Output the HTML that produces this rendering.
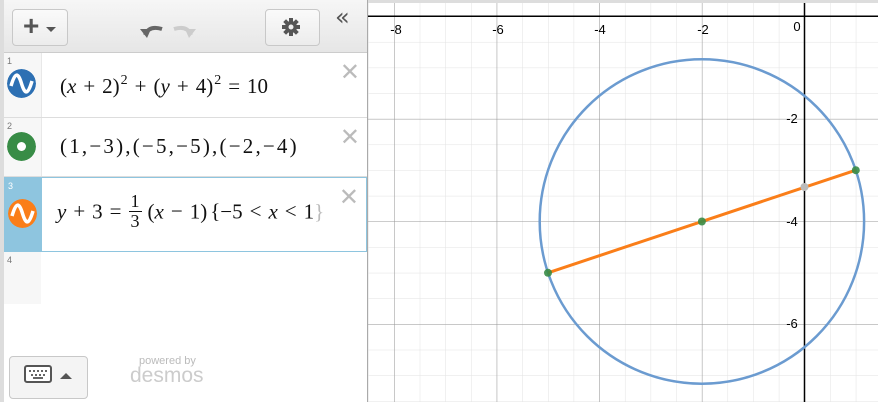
<!DOCTYPE html>
<html><head><meta charset="utf-8"><style>
body{margin:0;width:878px;height:402px;overflow:hidden;background:#fff;font-family:"Liberation Sans",sans-serif;position:relative}
.panel{position:absolute;left:0;top:0;width:368px;height:402px;background:#fff;border-right:1px solid #aaa;box-sizing:border-box}
.lb{position:absolute;left:0;top:0;width:4px;height:402px;background:#ddd}
.hdr{position:absolute;left:4px;top:0;width:363px;height:52px;background:linear-gradient(#f6f6f6,#e6e6e6);border-bottom:1px solid #ccc}
.btn{position:absolute;border:1px solid #c8c8c8;border-radius:4px;background:linear-gradient(#fafafa,#ececec)}
.row{position:absolute;left:4px;width:363px;border-bottom:1px solid #ddd;box-sizing:border-box}
.gut{position:absolute;left:0;top:0;width:37px;height:100%;background:#f7f7f7;border-right:1px solid #e8e8e8}
.num{position:absolute;left:3px;top:3px;font-size:9px;color:#777}
.ic{position:absolute;left:3px;width:29px;height:29px;border-radius:50%}
.m{position:absolute;left:56px;font-family:"Liberation Serif",serif;font-size:21px;color:#111;white-space:nowrap}
.m i{font-style:italic}
.m b{font-weight:normal;margin:0 7px}
.m sup{font-size:14px;vertical-align:9px;margin-left:1px}
.fr{display:inline-block;vertical-align:middle;text-align:center;font-size:18px;line-height:19px;margin:0 6px 0 0;position:relative;top:-2px}
.fr span{display:block;padding:0 2px}
.fr span+span{border-top:1px solid #111}
.x{position:absolute;right:7px;top:5px;color:#bbb;font-size:24px;font-family:"DejaVu Sans",sans-serif}
</style></head><body>
<div class="panel">
<div class="lb"></div>
<div class="hdr">
 <div class="btn" style="left:8px;top:9px;width:54px;height:35px"></div>
 <div style="position:absolute;left:19px;top:10px;font-size:28px;font-weight:bold;color:#555">+</div>
 <div style="position:absolute;left:42px;top:27px;width:0;height:0;border-left:5px solid transparent;border-right:5px solid transparent;border-top:5px solid #555"></div>
 <svg style="position:absolute;left:134px;top:20px" width="60" height="20"><path d="M7 15 Q11 5 24 9" fill="none" stroke="#666" stroke-width="4"/><path d="M2 9 L9 18 L13 9 Z" fill="#666"/><path d="M53 15 Q49 5 36 9" fill="none" stroke="#ccc" stroke-width="4"/><path d="M58 9 L51 18 L47 9 Z" fill="#ccc"/></svg>
 <div class="btn" style="left:261px;top:9px;width:53px;height:35px"></div>
 <svg style="position:absolute;left:278px;top:18px" width="18" height="18" viewBox="0 0 18 18"><g fill="#555"><circle cx="9" cy="9" r="6"/><rect x="7" y="0" width="4" height="18"/><rect x="0" y="7" width="18" height="4"/><rect x="7" y="0" width="4" height="18" transform="rotate(45 9 9)"/><rect x="7" y="0" width="4" height="18" transform="rotate(-45 9 9)"/></g><circle cx="9" cy="9" r="2.5" fill="#eee"/></svg>
 <div style="position:absolute;left:331px;top:3px;font-size:24px;color:#555;font-family:'DejaVu Sans'">«</div>
</div>
<div class="row" style="top:53px;height:65px"><div class="gut"></div><span class="num">1</span>
 <svg class="ic" style="top:16px" viewBox="0 0 29 29"><circle cx="14.5" cy="14.5" r="14.5" fill="#2d70b3"/><path d="M4 17 C8 3 11 3 14.5 14.5 S21 26 25 12" fill="none" stroke="#fff" stroke-width="3.5"/></svg>
 <div class="m" style="top:20px">(<i>x</i><b>+</b>2)<sup>2</sup><b>+</b>(<i>y</i><b>+</b>4)<sup>2</sup><b>=</b>10</div><span class="x">✕</span></div>
<div class="row" style="top:118px;height:59px"><div class="gut"></div><span class="num">2</span>
 <svg class="ic" style="top:14px" viewBox="0 0 29 29"><circle cx="14.5" cy="14.5" r="14.5" fill="#388c46"/><circle cx="14.5" cy="14.5" r="4.5" fill="#fff"/></svg>
 <div class="m" style="top:16px;letter-spacing:2.2px">(1,−3),(−5,−5),(−2,−4)</div><span class="x">✕</span></div>
<div class="row" style="top:177px;height:75px;border:1px solid #8ec5df"><div class="gut" style="background:#8ec5df;border:none"></div><span class="num" style="color:#fff">3</span>
 <svg class="ic" style="top:21px" viewBox="0 0 29 29"><circle cx="14.5" cy="14.5" r="14.5" fill="#fa7e19"/><path d="M4 17 C8 3 11 3 14.5 14.5 S21 26 25 12" fill="none" stroke="#fff" stroke-width="3.5"/></svg>
 <div class="m" style="top:16px;left:52px"><i>y</i><b>+</b>3<b>=</b><span class="fr"><span>1</span><span>3</span></span>(<i>x</i><b>−</b>1)<span style="margin-left:3px">{</span>−5<b>&lt;</b><i>x</i><b>&lt;</b>1<span style="color:#bbb">}</span></div><span class="x">✕</span></div>
<div style="position:absolute;left:4px;top:252px;width:37px;height:52px;background:#f7f7f7"><span class="num">4</span></div>
<div class="btn" style="left:9px;top:356px;width:77px;height:41px;background:#f4f4f4"></div>
<svg style="position:absolute;left:24px;top:365px" width="28" height="18"><rect x="1" y="1" width="26" height="16" rx="2" fill="#fff" stroke="#555" stroke-width="2"/><g fill="#666"><rect x="5" y="5" width="2" height="2"/><rect x="9" y="5" width="2" height="2"/><rect x="13" y="5" width="2" height="2"/><rect x="17" y="5" width="2" height="2"/><rect x="21" y="5" width="2" height="2"/><rect x="7" y="9" width="2" height="2"/><rect x="11" y="9" width="2" height="2"/><rect x="15" y="9" width="2" height="2"/><rect x="19" y="9" width="2" height="2"/><rect x="9" y="12" width="10" height="2"/></g></svg>
<div style="position:absolute;left:60px;top:373px;border-left:6px solid transparent;border-right:6px solid transparent;border-bottom:6px solid #555"></div>
<div style="position:absolute;left:139px;top:355px;font-size:11px;color:#bbb">powered by</div>
<div style="position:absolute;left:130px;top:364px;font-size:21px;color:#ccc">desmos</div>
</div>
<svg style="position:absolute;left:368px;top:0" width="510" height="402" viewBox="368 0 510 402">
<defs>
<pattern id="mn" patternUnits="userSpaceOnUse" x="804.5" y="16.3" width="25.65" height="25.65"><path d="M0 0V25.65M0 0H25.65" stroke="#e2e2e2" stroke-width="1"/></pattern>
<pattern id="mj" patternUnits="userSpaceOnUse" x="804.5" y="16.3" width="102.6" height="102.6"><path d="M0 0V102.6M0 0H102.6" stroke="#999" stroke-width="1"/></pattern>
</defs>
<rect x="368" y="0" width="510" height="402" fill="url(#mn)"/>
<rect x="368" y="0" width="510" height="402" fill="url(#mj)"/>
<rect x="368" y="0" width="510" height="3" fill="#ddd"/>
<line x1="368" y1="16.3" x2="878" y2="16.3" stroke="#000" stroke-width="1.5"/>
<line x1="804.5" y1="3" x2="804.5" y2="402" stroke="#000" stroke-width="1.5"/>
<g font-family="Liberation Sans" font-size="13" fill="#000" text-anchor="middle">
<text x="396" y="34">-8</text><text x="498" y="34">-6</text><text x="600" y="34">-4</text><text x="703" y="34">-2</text><text x="797" y="31">0</text>
<text x="792" y="123">-2</text><text x="792" y="226">-4</text><text x="792" y="328">-6</text></g>
<circle cx="701.9" cy="221.5" r="162.2" fill="none" stroke="#6b9bd0" stroke-width="2.5"/>
<line x1="548" y1="272.8" x2="855.8" y2="170.2" stroke="#fa7e19" stroke-width="3"/>
<circle cx="855.8" cy="170.2" r="4" fill="#388c46" opacity=".9"/>
<circle cx="548" cy="272.8" r="4" fill="#388c46" opacity=".9"/>
<circle cx="701.9" cy="221.5" r="4" fill="#388c46" opacity=".9"/>
<circle cx="804.5" cy="187" r="4" fill="#bbb"/>
</svg>
</body></html>
